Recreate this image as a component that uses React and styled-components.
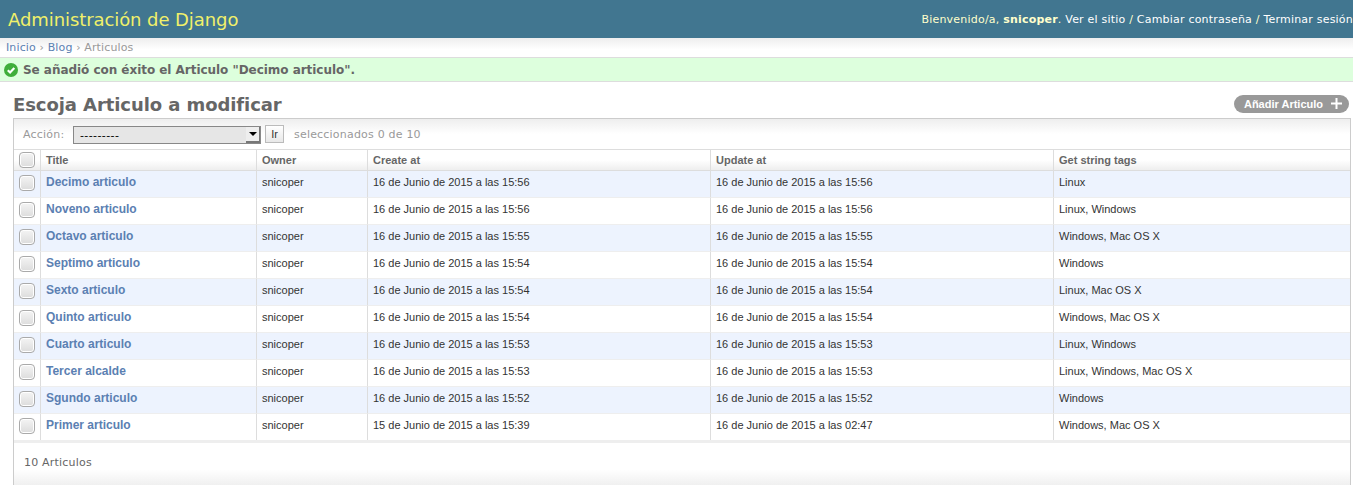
import React from 'react';
import styled, { createGlobalStyle } from 'styled-components';

const GlobalStyle = createGlobalStyle`
  html, body {
    margin: 0;
    padding: 0;
    height: 485px;
    overflow: hidden;
    background: #fff;
    color: #333;
    font-family: "DejaVu Sans", Verdana, sans-serif;
    font-size: 12px;
  }
`;

const Header = styled.header`
  display: flex;
  justify-content: space-between;
  align-items: center;
  height: 38px;
  padding-left: 8px;
  background: #417690;
  overflow: hidden;
  white-space: nowrap;
`;
const Brand = styled.h1`
  margin: 0;
  font-size: 18px;
  font-weight: 400;
  letter-spacing: -0.08px;
  color: #f0f06a;
`;
const UserTools = styled.div`
  flex: none;
  font-size: 11px;
  letter-spacing: 0.21px;
  color: #ffc;
  strong { font-weight: 700; }
`;
const ToolLink = styled.a`
  color: #fff;
`;
const Breadcrumbs = styled.nav`
  height: 19px;
  line-height: 19px;
  padding-left: 6px;
  font-size: 11px;
  letter-spacing: 0.13px;
  color: #999;
  background: linear-gradient(#eee, #fff 60%);
`;
const Crumb = styled.a`
  color: #5b80b2;
`;
const Message = styled.div`
  display: flex;
  align-items: center;
  gap: 5px;
  height: 23px;
  padding-left: 4px;
  background: #dfd;
  border-top: 1px solid #ddd;
  border-bottom: 1px solid #ddd;
  font-size: 12px;
  font-weight: 700;
  letter-spacing: -0.04px;
  color: #666;
`;
const Content = styled.main`
  padding: 11px 2px 0 13px;
`;
const TitleRow = styled.div`
  display: flex;
  justify-content: space-between;
  align-items: center;
  height: 25px;
`;
const Title = styled.h2`
  margin: 0 0 2px;
  font-size: 18px;
  line-height: 22px;
  font-weight: 700;
  letter-spacing: -0.08px;
  color: #666;
`;
const AddButton = styled.a`
  display: flex;
  align-items: center;
  gap: 8px;
  height: 18px;
  margin: 0 2px 4px 0;
  padding: 0 7px 0 10px;
  border-radius: 9px;
  background: #999;
  color: #fff;
  font-family: "Liberation Sans", Arial, sans-serif;
  font-size: 11px;
  font-weight: 700;
`;
const Panel = styled.section`
  border: 1px solid #ccc;
  border-bottom: 0;
`;
const Toolbar = styled.div`
  display: flex;
  align-items: center;
  height: 30px;
  padding-left: 9px;
  font-size: 11px;
  letter-spacing: 0.2px;
  color: #999;
  background: linear-gradient(#eee, #fff 50%);
  border-bottom: 1px solid #ddd;
`;
const ActionLabel = styled.label`
  width: 50px;
`;
const SelectWrap = styled.div`
  position: relative;
  width: 188px;
  height: 18px;
  margin-top: 2px;
`;
const ActionSelect = styled.select`
  appearance: none;
  display: block;
  width: 100%;
  height: 100%;
  margin: 0;
  padding: 0 0 0 6px;
  border: 1px solid #888;
  border-radius: 0;
  background: #e6e6e6;
  color: #000;
  font-family: "DejaVu Sans", Verdana, sans-serif;
  font-size: 11px;
  letter-spacing: 0.4px;
`;
const SelectArrow = styled.span`
  position: absolute;
  top: 1px;
  right: 1px;
  width: 14px;
  height: 16px;
  background: #eee;
  border-right: 1px solid #777;
  border-bottom: 2px solid #777;
  box-sizing: border-box;
  &::after {
    content: "";
    position: absolute;
    left: 3px;
    top: 5px;
    border: 4px solid transparent;
    border-top: 4px solid #000;
    border-bottom: 0;
  }
`;
const GoButton = styled.button`
  width: 19px;
  height: 18px;
  margin: 0 0 0 4px;
  padding: 0;
  border: 1px solid #bbb;
  background: linear-gradient(#fff, #e8e8e8);
  color: #333;
  font-family: "Liberation Sans", Arial, sans-serif;
  font-size: 11px;
  font-weight: 400;
`;
const Counter = styled.span`
  margin-left: 10px;
`;
const Table = styled.table`
  width: 100%;
  table-layout: fixed;
  border-collapse: separate;
  border-spacing: 0;
  font-family: "Liberation Sans", Arial, sans-serif;
  font-size: 11px;
`;
const Col = styled.col`
  width: ${p => p.$w}px;
`;
const Th = styled.th`
  height: 20px;
  padding: 0 5px;
  text-align: left;
  font-weight: 700;
  color: #666;
  background: linear-gradient(#fff, #fff 50%, #eee);
  border-bottom: 1px solid #ddd;
  border-left: ${p => (p.$first ? '0' : '1px solid #ddd')};
`;
const Row = styled.tr`
  background: ${p => (p.$alt ? '#edf3fe' : '#fff')};
`;
const Td = styled.td`
  box-sizing: border-box;
  height: 27px;
  padding: 0 5px 5px;
  color: #333;
  border-bottom: 1px solid #eee;
  border-left: ${p => (p.$first ? '0' : '1px solid #ddd')};
  white-space: nowrap;
`;
const TitleLink = styled.a`
  color: #5b80b2;
  font-size: 12px;
  font-weight: 700;
`;
const Check = styled.span`
  display: block;
  box-sizing: border-box;
  width: 16px;
  height: 16px;
  border: 1px solid #aaa;
  border-radius: 4px;
  background: linear-gradient(#f4f4f4, #dcdcdc);
  box-shadow: inset 0 0 0 1px #fff;
`;
const CheckTd = styled(Td)`
  padding-bottom: 2px;
  padding-left: 5px;
`;
const Footer = styled.div`
  height: 44px;
  padding-left: 10px;
  line-height: 39px;
  font-size: 11px;
  letter-spacing: 0.2px;
  color: #666;
  border-top: 3px solid #eee;
  margin-top: -1px;
  background: linear-gradient(#fff, #fff 60%, #eee);
`;

const rows = [
  ['Decimo articulo', '16 de Junio de 2015 a las 15:56', '16 de Junio de 2015 a las 15:56', 'Linux'],
  ['Noveno articulo', '16 de Junio de 2015 a las 15:56', '16 de Junio de 2015 a las 15:56', 'Linux, Windows'],
  ['Octavo articulo', '16 de Junio de 2015 a las 15:55', '16 de Junio de 2015 a las 15:55', 'Windows, Mac OS X'],
  ['Septimo articulo', '16 de Junio de 2015 a las 15:54', '16 de Junio de 2015 a las 15:54', 'Windows'],
  ['Sexto articulo', '16 de Junio de 2015 a las 15:54', '16 de Junio de 2015 a las 15:54', 'Linux, Mac OS X'],
  ['Quinto articulo', '16 de Junio de 2015 a las 15:54', '16 de Junio de 2015 a las 15:54', 'Windows, Mac OS X'],
  ['Cuarto articulo', '16 de Junio de 2015 a las 15:53', '16 de Junio de 2015 a las 15:53', 'Linux, Windows'],
  ['Tercer alcalde', '16 de Junio de 2015 a las 15:53', '16 de Junio de 2015 a las 15:53', 'Linux, Windows, Mac OS X'],
  ['Sgundo articulo', '16 de Junio de 2015 a las 15:52', '16 de Junio de 2015 a las 15:52', 'Windows'],
  ['Primer articulo', '15 de Junio de 2015 a las 15:39', '16 de Junio de 2015 a las 02:47', 'Windows, Mac OS X'],
];

const SuccessIcon = () => (
  <svg width="14" height="14" viewBox="0 0 14 14">
    <circle cx="7" cy="7" r="7" fill="#3fae3a" />
    <path d="M3.8 7.2 6.1 9.5 10.3 5" fill="none" stroke="#fff" strokeWidth="2.2" />
  </svg>
);

const PlusIcon = () => (
  <svg width="11" height="11" viewBox="0 0 11 11">
    <path d="M5.5 0v11M0 5.5h11" stroke="#fff" strokeWidth="2" />
  </svg>
);

export default function App() {
  return (
    <>
      <GlobalStyle />
      <Header>
        <Brand>Administración de Django</Brand>
        <UserTools>
          Bienvenido/a, <strong>snicoper</strong>. <ToolLink>Ver el sitio</ToolLink> / <ToolLink>Cambiar contraseña</ToolLink> / <ToolLink>Terminar sesión</ToolLink>
        </UserTools>
      </Header>
      <Breadcrumbs>
        <Crumb>Inicio</Crumb> › <Crumb>Blog</Crumb> › Articulos
      </Breadcrumbs>
      <Message>
        <SuccessIcon />
        Se añadió con éxito el Articulo "Decimo articulo".
      </Message>
      <Content>
        <TitleRow>
          <Title>Escoja Articulo a modificar</Title>
          <AddButton>Añadir Articulo <PlusIcon /></AddButton>
        </TitleRow>
        <Panel>
          <Toolbar>
            <ActionLabel>Acción:</ActionLabel>
            <SelectWrap>
              <ActionSelect defaultValue="">
                <option value="">---------</option>
              </ActionSelect>
              <SelectArrow />
            </SelectWrap>
            <GoButton>Ir</GoButton>
            <Counter>seleccionados 0 de 10</Counter>
          </Toolbar>
          <Table>
            <colgroup>
              <Col $w={26} />
              <Col $w={216} />
              <Col $w={111} />
              <Col $w={343} />
              <Col $w={343} />
              <col />
            </colgroup>
            <thead>
              <tr>
                <Th $first><Check /></Th>
                <Th>Title</Th>
                <Th>Owner</Th>
                <Th>Create at</Th>
                <Th>Update at</Th>
                <Th>Get string tags</Th>
              </tr>
            </thead>
            <tbody>
              {rows.map((r, i) => (
                <Row key={r[0]} $alt={i % 2 === 0}>
                  <CheckTd $first><Check /></CheckTd>
                  <Td><TitleLink>{r[0]}</TitleLink></Td>
                  <Td>snicoper</Td>
                  <Td>{r[1]}</Td>
                  <Td>{r[2]}</Td>
                  <Td>{r[3]}</Td>
                </Row>
              ))}
            </tbody>
          </Table>
          <Footer>10 Articulos</Footer>
        </Panel>
      </Content>
    </>
  );
}
